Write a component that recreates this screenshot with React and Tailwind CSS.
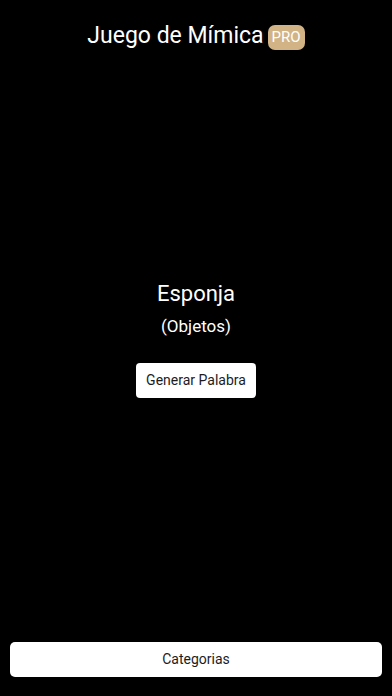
export default function App() {
  return (
    <div className="w-[392px] h-[696px] bg-black flex flex-col text-white" style={{ fontFamily: 'Roboto, "Noto Sans", sans-serif' }}>
      <div className="pt-[22px] flex justify-center items-center gap-[4px]">
        <span className="text-[23px] leading-[28px]">Juego de Mímica</span>
        <span className="bg-[#d1b386] text-white text-[15px] leading-[25px] h-[25px] px-[4px] rounded-[7px] mt-[2px]">PRO</span>
      </div>
      <div className="flex-1 flex flex-col items-center justify-center pb-[10px]">
        <div className="text-[22px] leading-[28px] -mt-[4px]">Esponja</div>
        <div className="text-[17px] leading-[22px] mt-[7px]">(Objetos)</div>
        <button className="mt-[26px] bg-white text-[#1c1c1e] text-[14px] h-[35px] px-[10px] rounded-[4px]">Generar Palabra</button>
      </div>
      <div className="px-[10px] pb-[19px]">
        <button className="w-full h-[35px] bg-white text-[#1c1c1e] text-[14px] rounded-[5px]">Categorias</button>
      </div>
    </div>
  );
}
